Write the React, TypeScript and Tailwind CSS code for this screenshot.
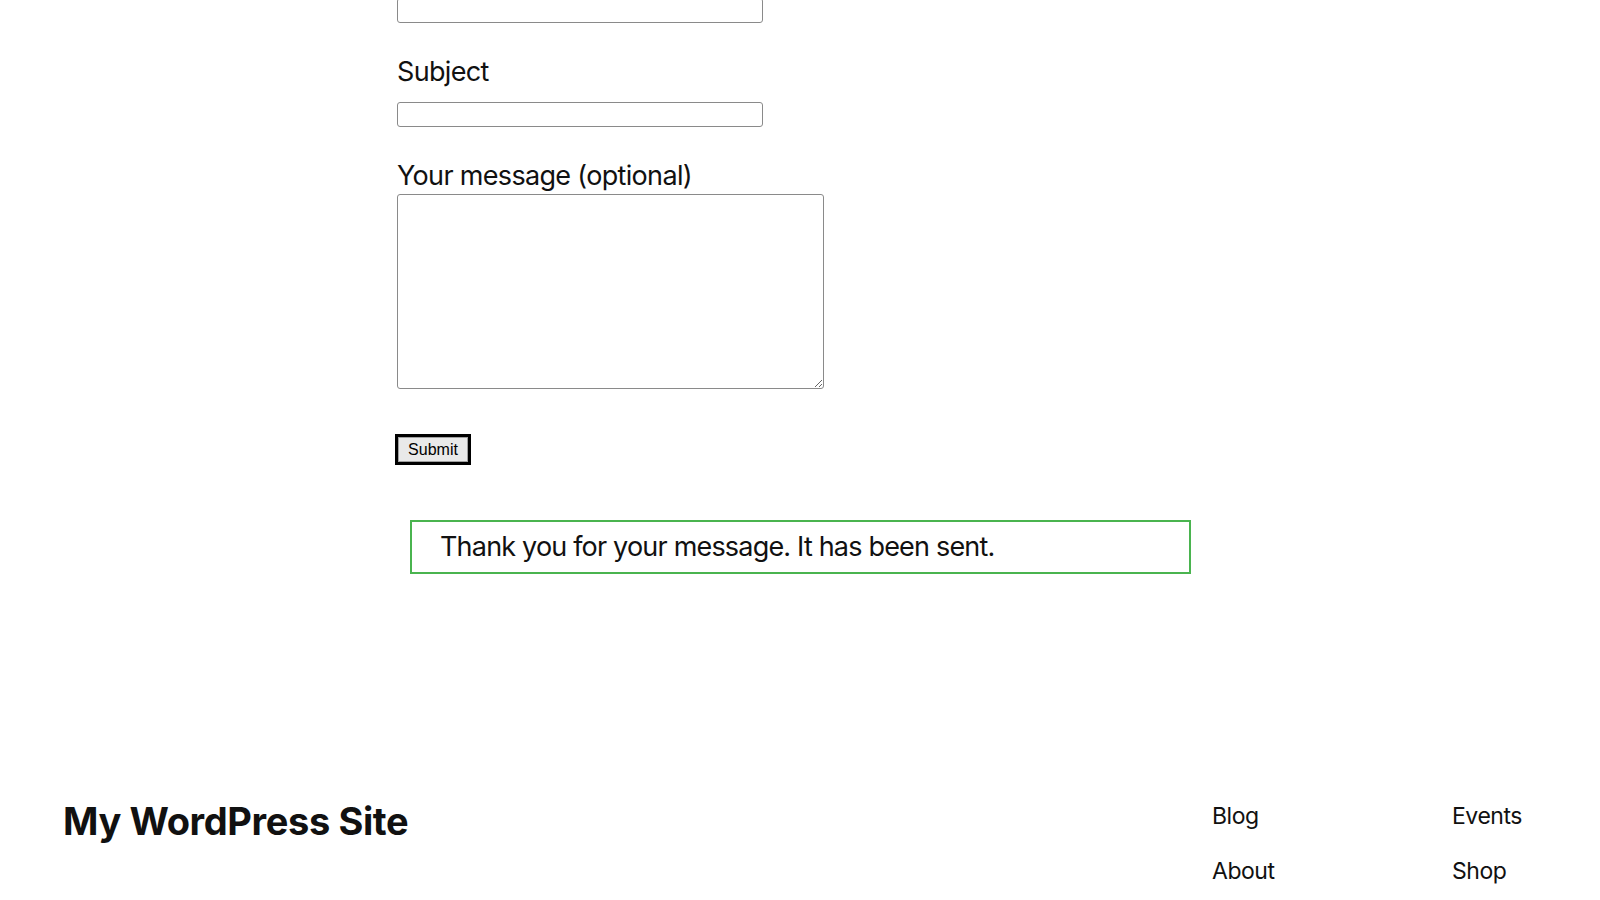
import React from "react";

const labelCls =
  "block text-[27px] leading-[32px] tracking-[-0.025em] text-[#111] font-['Inter',sans-serif]";
const inputCls =
  "block h-[25px] w-[366px] rounded-[3px] border border-[#8a8a8a] bg-white";

const App = () => {
  return (
    <div className="min-h-screen bg-white font-['Inter',sans-serif] text-[#111] overflow-hidden">
      <main className="ml-[397px] flex flex-col items-start">
        <input type="text" className={inputCls + " -mt-[2px]"} />

        <label className={labelCls + " mt-[33px]"}>Subject</label>
        <input type="text" className={inputCls + " mt-[14px]"} />

        <label className={labelCls + " mt-[33px]"}>Your message (optional)</label>
        <textarea className="mt-[2px] block h-[195px] w-[427px] rounded-[3px] border border-[#8a8a8a] bg-white" />

        <button
          type="button"
          className="-ml-[2px] mt-[45px] h-[31px] w-[76px] border-[3px] border-black bg-[#e9e9e9] font-['Liberation_Sans',Arial,sans-serif] text-[16px] text-black shadow-[inset_0_0_0_1px_#a0a0a0]"
        >
          Submit
        </button>

        <div className="ml-[13px] mt-[55px] w-[781px] border-2 border-[#4ab44f] pb-[9px] pl-[28px] pt-[9px] text-[27px] leading-[32px] tracking-[-0.03em]">
          Thank you for your message. It has been sent.
        </div>
      </main>

      <footer className="mt-[224px] flex items-start justify-between pl-[63px] pr-[48px]">
        <div className="text-[38px] font-bold leading-[46px] tracking-[-0.01em]">
          My WordPress Site
        </div>
        <nav className="mt-[2px] grid grid-cols-[240px_100px] gap-y-[23px] text-[23px] leading-[32px] tracking-[-0.02em]">
          <a>Blog</a>
          <a>Events</a>
          <a>About</a>
          <a>Shop</a>
        </nav>
      </footer>
    </div>
  );
};

export default App;
